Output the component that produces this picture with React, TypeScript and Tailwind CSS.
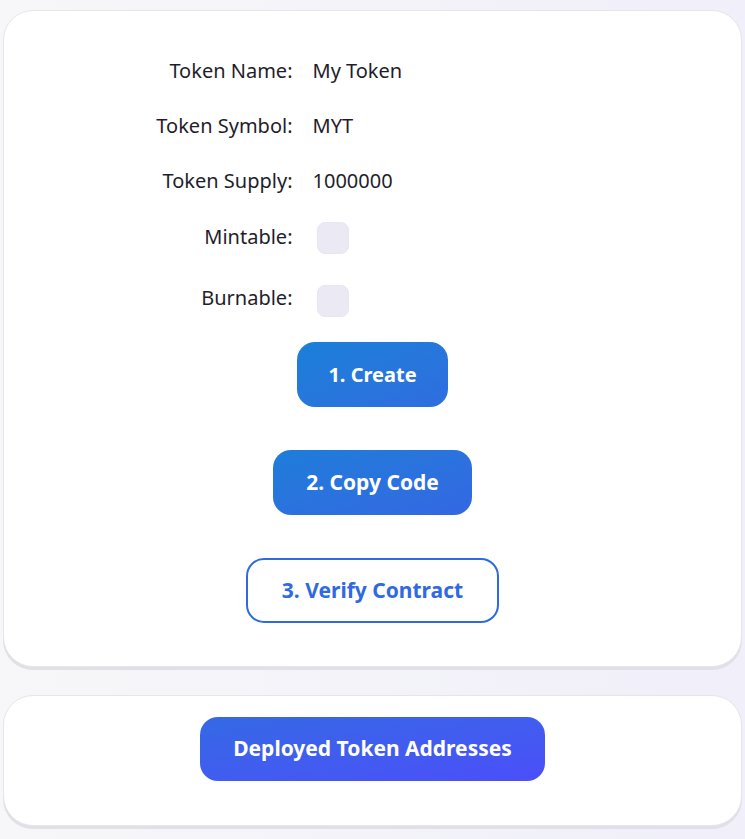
import React, { useState } from 'react'

const font = { fontFamily: '"Noto Sans", "Liberation Sans", sans-serif' }

function Row({ label, children, className = '', labelClass = '' }: { label: string, children: React.ReactNode, className?: string, labelClass?: string }) {
  return (
    <div className={`grid grid-cols-[150px_1fr] gap-x-5 items-center ${className}`}>
      <div className={`text-right text-[20px] leading-7 text-[#1f1d2b] ${labelClass}`}>{label}</div>
      <div className="text-[20px] leading-7 text-[#1f1d2b]">{children}</div>
    </div>
  )
}

function Check({ checked, onChange }: { checked: boolean, onChange: () => void }) {
  return (
    <button
      onClick={onChange}
      className={`ml-1 w-8 h-8 rounded-lg border border-[#e8e6f0] ${checked ? 'bg-[#2f6ae0]' : 'bg-[#ebe9f3]'}`}
    />
  )
}

export default function App() {
  const [mintable, setMintable] = useState(false)
  const [burnable, setBurnable] = useState(false)

  return (
    <div className="min-h-[839px] bg-gradient-to-r from-[#f7f7f9] to-[#f0effa] px-[3px] pt-[10px]" style={font}>
      {/* form card */}
      <div className="rounded-[30px] bg-white border border-[#e6e5ec] shadow-[0_3px_0_#e1e0e7] pt-[46px] pb-[43px]">
        <div className="w-[460px] mx-auto">
          <Row label="Token Name:" className="h-7">My Token</Row>
          <Row label="Token Symbol:" className="h-7 mt-[27px]">MYT</Row>
          <Row label="Token Supply:" className="h-7 mt-[27px]">1000000</Row>
          <Row label="Mintable:" className="h-8 mt-[27px]" labelClass="mb-[8px]">
            <Check checked={mintable} onChange={() => setMintable(!mintable)} />
          </Row>
          <Row label="Burnable:" className="h-8 mt-[30px]" labelClass="mb-[12px]">
            <Check checked={burnable} onChange={() => setBurnable(!burnable)} />
          </Row>
        </div>

        <div className="flex flex-col items-center gap-[43px] mt-[26px]">
          <button className="w-[151px] h-[65px] rounded-[18px] bg-gradient-to-br from-[#1a80d8] to-[#2f6de0] text-white font-bold text-[20px]">
            1. Create
          </button>
          <button className="w-[199px] h-[65px] rounded-[18px] bg-gradient-to-br from-[#1d7dd9] to-[#3467e3] text-white font-bold text-[21px]">
            2. Copy Code
          </button>
          <button className="w-[253px] h-[65px] rounded-[18px] bg-white border-2 border-[#2f6ae0] text-[#2f6ae0] font-bold text-[21px]">
            3. Verify Contract
          </button>
        </div>
      </div>

      {/* addresses card */}
      <div className="mt-[28px] rounded-[30px] bg-white border border-[#e6e5ec] shadow-[0_3px_0_#e1e0e7] pt-[21px] pb-[44px] flex justify-center">
        <button className="w-[345px] h-[64px] rounded-[18px] bg-gradient-to-br from-[#3469e5] to-[#4b4ef9] text-white font-bold text-[21px]">
          Deployed Token Addresses
        </button>
      </div>
    </div>
  )
}
